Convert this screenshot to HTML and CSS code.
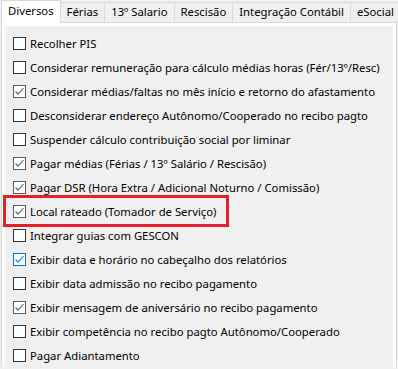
FILE: index.html
```html
<!DOCTYPE html>
<html lang="pt-BR">
<head>
    <meta charset="UTF-8">
    <meta name="viewport" content="width=device-width, initial-scale=1.0">
    <title>Parâmetros - Diversos</title>
    <link rel="stylesheet" href="styles.css">
</head>
<body>
    <div class="tabs">
        <div class="tab active">Diversos</div>
        <div class="tab">Férias</div>
        <div class="tab">13º Salario</div>
        <div class="tab">Rescisão</div>
        <div class="tab">Integração Contábil</div>
        <div class="tab">eSocial</div>
    </div>

    <div class="panel">
        <div class="page">
            <label class="option"><span class="box"></span>Recolher PIS</label>
            <label class="option"><span class="box"></span>Considerar remuneração para cálculo médias horas (Fér/13º/Resc)</label>
            <label class="option"><span class="box checked"><svg viewBox="0 0 11 11"><polyline points="1.5,5.5 4,8 9.5,2"/></svg></span>Considerar médias/faltas no mês início e retorno do afastamento</label>
            <label class="option"><span class="box"></span>Desconsiderar endereço Autônomo/Cooperado no recibo pagto</label>
            <label class="option"><span class="box"></span>Suspender cálculo contribuição social por liminar</label>
            <label class="option"><span class="box checked"><svg viewBox="0 0 11 11"><polyline points="1.5,5.5 4,8 9.5,2"/></svg></span>Pagar médias (Férias / 13º Salário / Rescisão)</label>
            <label class="option"><span class="box checked"><svg viewBox="0 0 11 11"><polyline points="1.5,5.5 4,8 9.5,2"/></svg></span>Pagar DSR (Hora Extra / Adicional Noturno / Comissão)</label>
            <label class="option"><span class="box checked"><svg viewBox="0 0 11 11"><polyline points="1.5,5.5 4,8 9.5,2"/></svg></span>Local rateado (Tomador de Serviço)<span class="highlight"></span></label>
            <label class="option"><span class="box"></span>Integrar guias com GESCON</label>
            <label class="option"><span class="box checked focus"><svg viewBox="0 0 11 11"><polyline points="1.5,5.5 4,8 9.5,2"/></svg></span>Exibir data e horário no cabeçalho dos relatórios</label>
            <label class="option"><span class="box"></span>Exibir data admissão no recibo pagamento</label>
            <label class="option"><span class="box checked"><svg viewBox="0 0 11 11"><polyline points="1.5,5.5 4,8 9.5,2"/></svg></span>Exibir mensagem de aniversário no recibo pagamento</label>
            <label class="option"><span class="box"></span>Exibir competência no recibo pagto Autônomo/Cooperado</label>
            <label class="option"><span class="box"></span>Pagar Adiantamento</label>
        </div>
    </div>
</body>
</html>
```

FILE: styles.css
```css
body {
    margin: 0;
    background-color: #f0f0f0;
    color: #000000;
    font-family: "Noto Sans", "Open Sans", sans-serif;
    font-size: 11.3px;
    overflow: hidden;
}
.tabs {
    display: flex;
    align-items: flex-end;
    height: 22px;
    padding-left: 1px;
    position: relative;
    z-index: 1;
}
.tab {
    height: 19px;
    line-height: 18px;
    padding: 0 6px;
    margin-left: -1px;
    border: 1px solid #d9d9d9;
    border-bottom: none;
    background-color: #f0f0f0;
    white-space: nowrap;
}
.tab:first-child {
    margin-left: 0;
}
.tab.active {
    height: 22px;
    line-height: 20px;
    margin-bottom: -1px;
    padding: 0 6px;
    background-color: #ffffff;
    position: relative;
    z-index: 1;
}
.panel {
    margin: 0 1px;
    border: 1px solid #d9d9d9;
    border-bottom: none;
}
.page {
    border: 3px solid #ffffff;
    border-bottom: none;
    background-color: #f0f0f0;
    padding: 5px 0 0 8px;
}
.option {
    display: flex;
    align-items: center;
    height: 24px;
    position: relative;
    white-space: nowrap;
}
.box {
    width: 11px;
    height: 11px;
    border: 1px solid #333333;
    background-color: #ffffff;
    margin-right: 4px;
    flex-shrink: 0;
}
.box.checked {
    border-color: #5a5a5a;
}
.box svg {
    display: block;
    width: 11px;
    height: 11px;
    fill: none;
    stroke: #5a5a5a;
    stroke-width: 1.1;
}
.box.focus {
    border-color: #0078d7;
}
.box.focus svg {
    stroke: #0078d7;
}
.highlight {
    position: absolute;
    left: -10px;
    top: -4px;
    width: 220px;
    height: 26px;
    border: 3px solid #e3202c;
}
```
